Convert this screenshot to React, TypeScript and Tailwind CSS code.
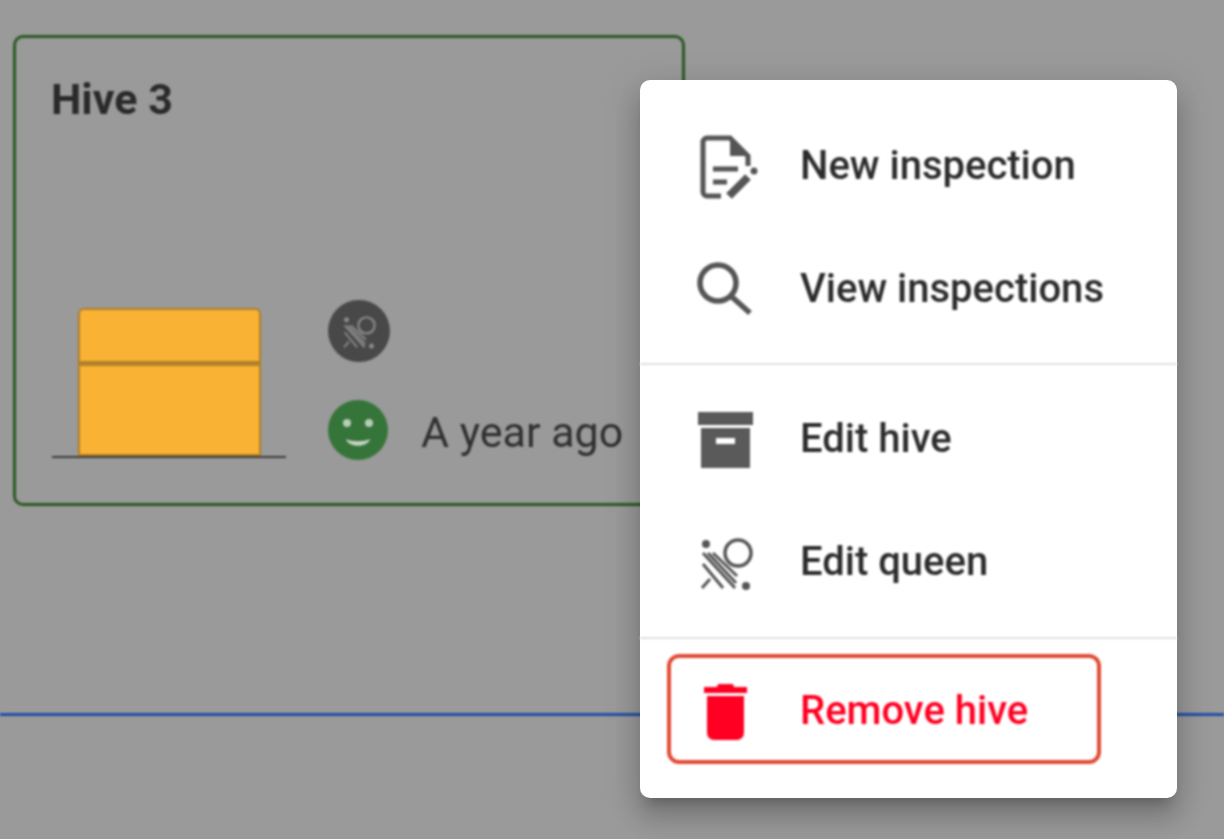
import React, { ReactNode } from "react";

const NewInspectionIcon = () => (
    <svg viewBox="0 0 64 64" className="w-16 h-16 overflow-visible">
        <path d="M27 62H13a4 4 0 0 1-4-4V8a4 4 0 0 1 4-4h23l18 18v10" fill="none" stroke="#555555" strokeWidth="5" />
        <path d="M36 4l20 18H36z" fill="#555555" />
        <path d="M19 35h25M19 48h14" stroke="#555555" strokeWidth="5" fill="none" />
        <path d="M35 62l19-19" stroke="#555555" strokeWidth="8" fill="none" />
        <circle cx="60" cy="37" r="3.5" fill="#555555" />
    </svg>
);

const SearchIcon = () => (
    <svg viewBox="0 0 64 64" className="w-16 h-16">
        <circle cx="24" cy="26" r="18" fill="none" stroke="#555555" strokeWidth="5.5" />
        <path d="M38 40l18 16" stroke="#555555" strokeWidth="5.5" fill="none" />
    </svg>
);

const ArchiveIcon = () => (
    <svg viewBox="0 0 64 64" className="w-16 h-16">
        <path d="M4 5h55v13H4z" fill="#5a5a5a" />
        <path d="M7 21h49v40H7z" fill="#5a5a5a" />
        <path d="M22 31h19v6H22z" fill="#ffffff" />
    </svg>
);

const QueenIcon = ({ color, className }: { color: string; className: string }) => (
    <svg viewBox="0 0 64 64" className={className}>
        <circle cx="44" cy="23" r="13" fill="none" stroke={color} strokeWidth="3.5" />
        <circle cx="12" cy="14" r="4" fill={color} />
        <circle cx="52" cy="56" r="4" fill={color} />
        <path
            d="M19 23l24 23M9 23l32 35M14 23l28 30M9 34l20 24M8 58l8-9"
            stroke={color}
            strokeWidth="3"
            fill="none"
        />
    </svg>
);

const TrashIcon = () => (
    <svg viewBox="0 0 64 64" className="w-16 h-16">
        <path d="M10 10h13l1-3h15l1 3h13v6H10z" fill="#ff0022" />
        <path d="M13 19h37v37a7 7 0 0 1-7 7H20a7 7 0 0 1-7-7z" fill="#ff0022" />
    </svg>
);

const Smiley = () => (
    <svg viewBox="0 0 60 60" className="w-[60px] h-[60px]">
        <circle cx="30" cy="30" r="30" fill="#357539" />
        <circle cx="19" cy="23" r="4" fill="#b9cdb9" />
        <circle cx="41" cy="23" r="4" fill="#b9cdb9" />
        <path d="M18 39c6 3 18 3 24 0-2 9-22 9-24 0z" fill="#c4d4c4" />
    </svg>
);

const MenuItem = ({ icon, label }: { icon: ReactNode; label: string }) => (
    <div className="flex items-center h-[123px] pl-[54px]">
        {icon}
        <span className="ml-[42px] text-[40px] font-medium text-[#2c2c2c] whitespace-nowrap">{label}</span>
    </div>
);

export default function App() {
    return (
        <div className="relative h-[839px] overflow-hidden bg-[#9a9a9a] font-['Roboto',sans-serif]">
            <div className="ml-[13px] pt-[35px] blur-[0.8px]">
                <div className="flex flex-col justify-between w-[672px] h-[471px] border-[3px] border-[#2a5a22] rounded-[10px] pl-[35px] pt-[33px] pb-[41px]">
                    <h2 className="text-[43px] leading-[56px] font-bold text-[#2a2a2a]">Hive 3</h2>
                    <div className="flex items-end ml-px">
                        <div className="w-[234px] mb-[4px] border-b-2 border-[#3c3c3c]">
                            <div className="ml-[26px] w-[183px] h-[148px] bg-[#f9b233] border-2 border-[#b0802a] rounded-t-[6px]">
                                <div className="h-[56px] border-b-[5px] border-[#b0802a]" />
                            </div>
                        </div>
                        <div className="ml-[42px] flex flex-col gap-[36px]">
                            <div className="flex items-center justify-center w-[62px] h-[62px] rounded-full bg-[#484848]">
                                <QueenIcon color="#8a8a8a" className="w-10 h-10" />
                            </div>
                            <div className="flex items-center gap-[33px]">
                                <Smiley />
                                <span className="text-[43px] leading-[60px] text-[#303030] whitespace-nowrap mt-1">A year ago</span>
                            </div>
                        </div>
                    </div>
                </div>
            </div>
            <div className="mt-[207px] h-[3px] bg-[#1f4ea8] blur-[0.8px]" />

            <div className="absolute left-[640px] top-[80px] w-[537px] h-[718px] bg-white rounded-[10px] pt-[24px] shadow-[0_12px_12px_-8px_rgba(0,0,0,0.2),0_20px_25px_2px_rgba(0,0,0,0.14),0_8px_35px_5px_rgba(0,0,0,0.12)]">
                <div className="blur-[0.8px]">
                    <MenuItem icon={<NewInspectionIcon />} label="New inspection" />
                    <MenuItem icon={<SearchIcon />} label="View inspections" />
                    <div className="mt-[13px] mb-[12px] h-[2px] bg-[#e0e0e0]" />
                    <MenuItem icon={<ArchiveIcon />} label="Edit hive" />
                    <MenuItem icon={<QueenIcon color="#555555" className="w-16 h-16" />} label="Edit queen" />
                    <div className="mt-[14px] mb-[15px] h-[2px] bg-[#e0e0e0]" />
                    <div className="flex items-center ml-[27px] w-[434px] h-[110px] pl-[23px] border-4 border-[#e04a33] rounded-[12px]">
                        <TrashIcon />
                        <span className="ml-[42px] mt-[3px] text-[40px] font-medium text-[#ff0022] whitespace-nowrap">Remove hive</span>
                    </div>
                </div>
            </div>
        </div>
    );
}
